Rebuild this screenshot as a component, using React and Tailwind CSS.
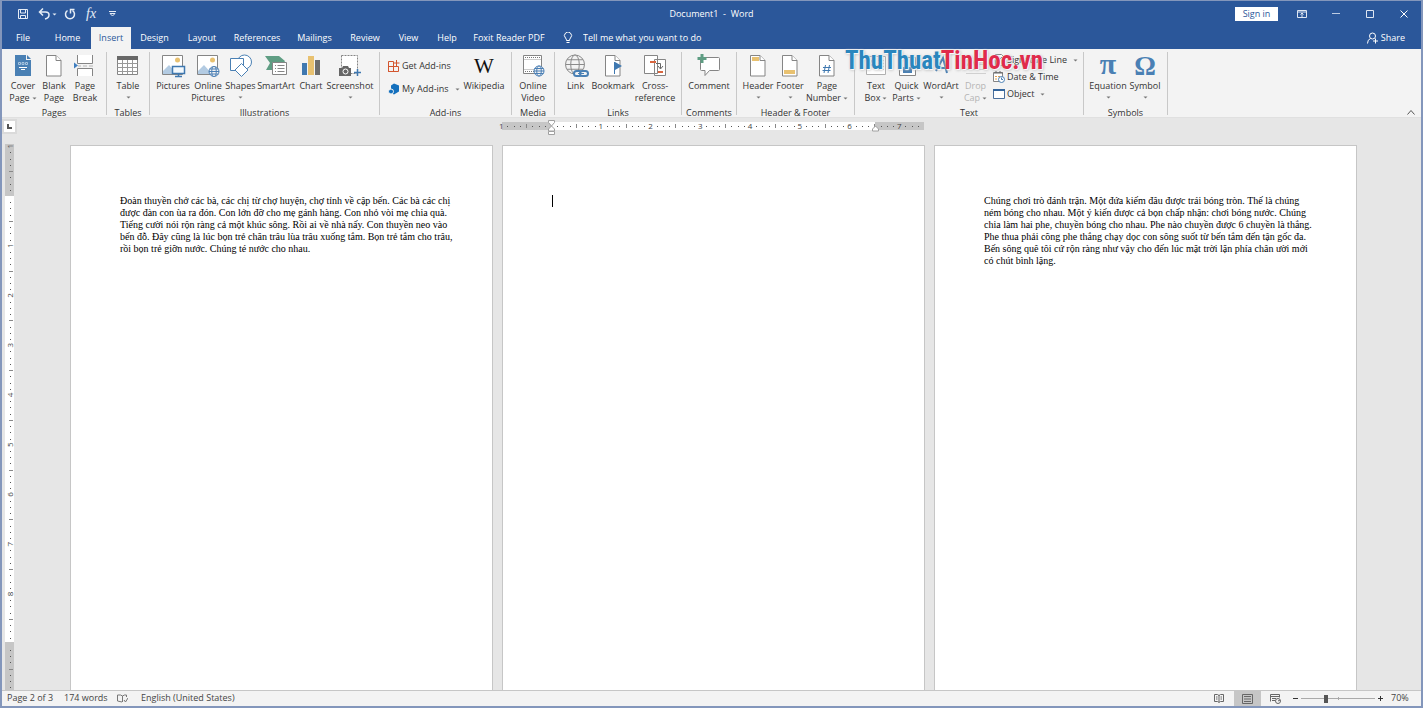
import clsx from 'clsx'

const INCH = 49.75

const tabs = [
  { name: 'File', width: 'w-[42px]' },
  { name: 'Home', width: 'w-[47px]' },
  { name: 'Insert', width: 'w-[40px]' },
  { name: 'Design', width: 'w-[47px]' },
  { name: 'Layout', width: 'w-[48px]' },
  { name: 'References', width: 'w-[62px]' },
  { name: 'Mailings', width: 'w-[53px]' },
  { name: 'Review', width: 'w-[48px]' },
  { name: 'View', width: 'w-[39px]' },
  { name: 'Help', width: 'w-[38px]' },
  { name: 'Foxit Reader PDF', width: 'w-[86px]' },
]

const leftPage = [
  'Đoàn thuyền chở các bà, các chị từ chợ huyện, chợ tỉnh về cập bến. Các bà các chị',
  'được đàn con ùa ra đón. Con lớn đỡ cho mẹ gánh hàng. Con nhỏ vòi mẹ chia quà.',
  'Tiếng cười nói rộn ràng cả một khúc sông. Rồi ai về nhà nấy. Con thuyền neo vào',
  'bến đỗ. Đây cũng là lúc bọn trẻ chăn trâu lùa trâu xuống tắm. Bọn trẻ tắm cho trâu,',
  'rồi bọn trẻ giỡn nước. Chúng té nước cho nhau.',
]

const rightPage = [
  'Chúng chơi trò đánh trận. Một đứa kiếm đâu được trái bóng tròn. Thế là chúng',
  'ném bóng cho nhau. Một ý kiến được cả bọn chấp nhận: chơi bóng nước. Chúng',
  'chia làm hai phe, chuyền bóng cho nhau. Phe nào chuyền được 6 chuyền là thắng.',
  'Phe thua phải cõng phe thắng chạy dọc con sông suốt từ bến tắm đến tận gốc đa.',
  'Bến sông quê tôi cứ rộn ràng như vậy cho đến lúc mặt trời lặn phía chân ười mới',
  'có chút bình lặng.',
]

/* Icons */

function Icon({ children, className = 'w-[26px] h-6', box = '0 0 26 24' }) {
  return (
    <svg className={className} viewBox={box} fill="none" stroke="#858585" strokeWidth="1" aria-hidden="true">
      {children}
    </svg>
  )
}

function Caret({ className }) {
  return (
    <svg className={clsx('inline-block w-[5px] h-[3px]', className)} viewBox="0 0 5 3" aria-hidden="true">
      <path d="M0.5 0.5h4l-2 2z" fill="currentColor" />
    </svg>
  )
}

function Globe({ x, y, r, color = '#4a7fb5' }) {
  return (
    <g stroke={color} fill="#f3f3f3">
      <circle cx={x} cy={y} r={r} />
      <ellipse cx={x} cy={y} rx={r * 0.45} ry={r} />
      <path d={`M${x - r} ${y}h${r * 2}M${x - r * 0.85} ${y - r * 0.5}h${r * 1.7}M${x - r * 0.85} ${y + r * 0.5}h${r * 1.7}`} />
    </g>
  )
}

function PagePath() {
  return (
    <>
      <path d="M5.5 1.5h9.500l5 5v15.500h-14.500z" fill="#fff" />
      <path d="M15 1.500v5h5" fill="#fff" />
    </>
  )
}

const CoverIcon = () => (
  <Icon>
    <path d="M5 1h11v5h5v16h-16z" fill="#4a80b4" stroke="none" />
    <path d="M17 1l4 4h-4z" fill="#4a80b4" stroke="none" />
    <path d="M8.500 8.500h2v2h-2zM12 8.500h2v2h-2zM15.500 8.500h2v2h-2z" stroke="#a9c5de" />
    <path d="M9 13.500h8M11 15.500h4" stroke="#fff" />
  </Icon>
)

const BlankIcon = () => <Icon><PagePath /></Icon>

const BreakIcon = () => (
  <Icon>
    <path d="M5.500 1v8.500h15v-8.500M5.500 22v-7.500h15v7.500" fill="#fff" />
    <path d="M6 12h3M11 12h4M17 12h4" stroke="#b5b5b5" />
    <path d="M2 8.500v6l4-3z" fill="#3f7ebf" stroke="none" />
  </Icon>
)

const TableIcon = () => (
  <Icon>
    <path d="M2.500 2.500h20v18h-20z" fill="#fff" />
    <path d="M2 2h21v4h-21z" fill="#686868" stroke="none" />
    <path d="M2.500 9.500h20M2.500 13.500h20M2.500 17.500h20M7.500 6v14M12.500 6v14M17.500 6v14" stroke="#999" />
  </Icon>
)

function PictureBase() {
  return (
    <>
      <path d="M2.500 1.500h20v19h-20z" fill="#fff" />
      <circle cx="17.500" cy="6" r="2.500" fill="#e8c170" stroke="none" />
      <path d="M3 20v-3l6-6 8 9z" fill="#b3cbe2" stroke="none" />
    </>
  )
}

const PicturesIcon = () => (
  <Icon>
    <PictureBase />
    <path d="M12.500 12.500h12v7h-12z" fill="#f3f8fc" stroke="#3f78b0" strokeWidth="1.500" />
    <path d="M15 22.500h7M18.500 20v2" stroke="#3f78b0" strokeWidth="1.500" />
  </Icon>
)

const OnlinePicturesIcon = () => (
  <Icon><PictureBase /><Globe x={19} y={17.500} r={5} /></Icon>
)

const ShapesIcon = () => (
  <Icon>
    <g stroke="#4a80b4" fill="#fff">
      <circle cx="16.500" cy="8" r="7" />
      <path d="M2.500 4.500h13v12h-13z" />
      <path d="M13.500 9.500l6.500 6.500-6.500 6.500-6.500-6.500z" />
    </g>
  </Icon>
)

const SmartArtIcon = () => (
  <Icon>
    <path d="M2 2h14l6 5-1 2h-9v7h-9l4-7z" fill="#5f9d83" stroke="none" />
    <path d="M9.500 8.500h14v12h-14z" fill="#fff" />
    <path d="M12 11.500h1M12 14.500h1M12 17.500h1M14.500 11.500h7M14.500 14.500h7M14.500 17.500h7" />
  </Icon>
)

const ChartIcon = () => (
  <Icon>
    <path d="M4 9h5v12h-5z" fill="#3f78b0" stroke="none" />
    <path d="M10 2h6v19h-6z" fill="#e8c170" stroke="none" />
    <path d="M17 6h5v15h-5z" fill="#6d6d6d" stroke="none" />
  </Icon>
)

const ScreenshotIcon = () => (
  <Icon>
    <path d="M4.500 1.500h16v18h-16z" fill="#fff" strokeDasharray="2 1" />
    <path d="M2 14h3l1-2h5l1 2h2v8h-12z" fill="#666" stroke="none" />
    <circle cx="8.500" cy="17.500" r="2.500" stroke="#fff" />
    <path d="M20.500 15v7M17 18.500h7" stroke="#3f78b0" strokeWidth="1.500" />
  </Icon>
)

const WikipediaIcon = () => (
  <span className="flex h-6 items-center justify-center font-['Liberation_Serif',serif] text-[21px] leading-6 text-[#111]">W</span>
)

const VideoIcon = () => (
  <Icon>
    <path d="M3.500 1.500h18v18h-18z" fill="#fff" />
    <path d="M5 3.500h16M5 17.500h16" stroke="#777" strokeDasharray="1 1" />
    <path d="M4 5.500h17M4 15.500h17" stroke="#ccc" />
    <Globe x={19} y={17} r={5} />
  </Icon>
)

const LinkIcon = () => (
  <Icon>
    <Globe x={12} y={10.500} r={9.500} color="#8a8a8a" />
    <g stroke="#4a80b4" strokeWidth="2" fill="#f3f3f3">
      <rect x="11" y="17" width="8" height="5" rx="2.500" />
      <rect x="17" y="17" width="8" height="5" rx="2.500" />
    </g>
    <path d="M15 19.500h6" stroke="#4a80b4" />
  </Icon>
)

const BookmarkIcon = () => (
  <Icon>
    <PagePath />
    <path d="M14.500 8v12" stroke="#3f78b0" />
    <path d="M15 8l7 4-7 4z" fill="#3f78b0" stroke="none" />
  </Icon>
)

const CrossRefIcon = () => (
  <Icon>
    <path d="M2.500 1.500h13v18h-13zM12.500 5.500h11v16h-11z" fill="#fff" />
    <path d="M8 8h6M16 18h5" stroke="#d8663f" strokeWidth="2" />
    <path d="M14 9.500h4.500v5M16 12l2.500 3 2.500-3" stroke="#666" />
  </Icon>
)

const CommentIcon = () => (
  <Icon>
    <path d="M4.500 3.500h18q1 0 1 1v11q0 1-1 1h-9l-4.500 5v-5h-3.500q-1 0-1-1z" fill="#fff" />
    <path d="M6 0v9M1.500 4.500h9" stroke="#5f9d83" strokeWidth="3" />
  </Icon>
)

const HeaderIcon = () => (
  <Icon><PagePath /><path d="M7 3h7v4h-7z" fill="#e8c170" stroke="none" /></Icon>
)

const FooterIcon = () => (
  <Icon><PagePath /><path d="M7 16h11v4h-11z" fill="#e8c170" stroke="none" /></Icon>
)

const PageNumberIcon = () => (
  <Icon>
    <PagePath />
    <path d="M11.500 11l-1.500 8M15.500 11l-1.500 8M9 13.500h8M8.500 16.500h8" stroke="#3f78b0" />
  </Icon>
)

const TextBoxIcon = () => (
  <Icon>
    <path d="M3.500 2.500h19v18h-19z" fill="#fff" stroke="#b0b0b0" />
    <path d="M15 6.500h6M15 9.500h6M15 12.500h6M15 15.500h6" stroke="#ccc" />
    <path d="M6 13l3-7 3 7M7 11h4" stroke="#9db9d4" />
  </Icon>
)

const QuickPartsIcon = () => (
  <Icon>
    <path d="M5.500 3.500h16v18h-16z" fill="#fff" />
    <path d="M9 13h9v6h-9z" fill="#4a80b4" stroke="none" />
  </Icon>
)

const WordArtIcon = () => (
  <Icon><path d="M8 17l7-13 4 15M10 14h8" stroke="#4a80b4" strokeWidth="2" /></Icon>
)

const DropCapIcon = () => (
  <Icon>
    <path d="M3 15.500h20M3 19.500h20M14 5.500h9M14 10.500h9" stroke="#d0d0d0" />
    <path d="M4 12l4-9 4 9" stroke="#c6c6c6" />
  </Icon>
)

const EquationIcon = () => (
  <span className="flex h-5 items-center justify-center font-['Liberation_Serif',serif] text-[30px] font-bold leading-5 text-[#4a80b4]">π</span>
)

const SymbolIcon = () => (
  <span className="flex h-6 items-center justify-center font-['Liberation_Serif',serif] text-[27px] font-bold leading-6 text-[#4a80b4]">Ω</span>
)

const GetAddinsIcon = () => (
  <Icon className="w-3 h-3" box="0 0 12 12">
    <path d="M0.500 1.500h5v10h-5zM0.500 6.500h10v5h-10zM8.500 0v6M5.500 3h6" stroke="#d3552e" />
  </Icon>
)

const MyAddinsIcon = () => (
  <Icon className="w-3 h-3" box="0 0 12 12">
    <path d="M6 0.500l5 2v6l-5 3-3-1.500v-7.500z" fill="#1470bd" stroke="none" />
    <circle cx="3" cy="8.500" r="2.500" fill="#1470bd" stroke="#f3f3f3" />
  </Icon>
)

const SignatureIcon = () => (
  <Icon className="w-3 h-3" box="0 0 12 12">
    <path d="M2.500 0.500h6l2 2v9h-8z" fill="#fff" />
    <path d="M4 8l5-5" stroke="#4a80b4" />
  </Icon>
)

const DateIcon = () => (
  <Icon className="w-3 h-3" box="0 0 12 12">
    <path d="M0.500 1.500h9v9h-9z" fill="#fff" />
    <path d="M1 2h9M3 0v2M7 0v2" stroke="#666" />
    <path d="M2 5.500h2M2 8h2M5 5.500h2" stroke="#e0a050" />
    <circle cx="8.500" cy="8.500" r="3" fill="#fff" stroke="#4a80b4" />
    <path d="M8.500 6.500v2h1.500" stroke="#4a80b4" />
  </Icon>
)

const ObjectIcon = () => (
  <Icon className="w-3 h-3" box="0 0 12 12">
    <path d="M0.500 1.500h11v9h-11z" fill="#fff" stroke="#4a6f9c" />
    <path d="M0 2h12" stroke="#33659c" strokeWidth="2" />
  </Icon>
)

/* Ribbon */

function BigButton({ icon, lines, menu, width, disabled }) {
  return (
    <button
      disabled={disabled}
      className={clsx('flex shrink-0 flex-col items-center whitespace-nowrap leading-3', width, disabled && 'text-[#b5b5b5]')}
    >
      <span className="mb-[2px] flex h-6 w-full justify-center">{icon}</span>
      {lines.map((line, i) => (
        <span key={line}>
          {line}
          {menu && i === 1 && <Caret className="ml-[2px] align-middle text-[#777]" />}
        </span>
      ))}
      {menu && lines.length === 1 && <Caret className="mt-1 text-[#777]" />}
    </button>
  )
}

function SmallButton({ icon, label, menu, gap }) {
  return (
    <button className="flex items-center gap-[2px] whitespace-nowrap leading-3">
      {icon}
      {label}
      {menu && <Caret className={clsx('text-[#777]', gap)} />}
    </button>
  )
}

function Group({ label, width, pad, children }) {
  return (
    <section aria-label={label} className={clsx('flex shrink-0 flex-col', width)}>
      <div className={clsx('flex h-[53px] shrink-0', pad)}>{children}</div>
      <div className="whitespace-nowrap text-center leading-3 text-[#333]">{label}</div>
    </section>
  )
}

const Divider = () => <div className="-mt-[2px] mb-[2px] w-px shrink-0 bg-[#c8c8c8]" />

function Ribbon() {
  return (
    <div className="relative flex h-[69px] shrink-0 border-b border-[#e0e0e0] bg-[#f3f3f3] pt-[5px] text-[#333]">
      <Group label="Pages" width="w-[104px]" pad="pl-[5px]">
        <BigButton icon={<CoverIcon />} lines={['Cover', 'Page']} menu width="w-[32px]" />
        <BigButton icon={<BlankIcon />} lines={['Blank', 'Page']} width="w-[30px]" />
        <BigButton icon={<BreakIcon />} lines={['Page', 'Break']} width="w-[32px]" />
      </Group>
      <Divider />
      <Group label="Tables" width="w-[42px]">
        <BigButton icon={<TableIcon />} lines={['Table']} menu width="w-[42px]" />
      </Group>
      <Divider />
      <Group label="Illustrations" width="w-[229px]" pad="pl-1">
        <BigButton icon={<PicturesIcon />} lines={['Pictures']} width="w-[38px]" />
        <BigButton icon={<OnlinePicturesIcon />} lines={['Online', 'Pictures']} width="w-[32px]" />
        <BigButton icon={<ShapesIcon />} lines={['Shapes']} menu width="w-[33px]" />
        <BigButton icon={<SmartArtIcon />} lines={['SmartArt']} width="w-[38px]" />
        <BigButton icon={<ChartIcon />} lines={['Chart']} width="w-[32px]" />
        <BigButton icon={<ScreenshotIcon />} lines={['Screenshot']} menu width="w-[46px]" />
      </Group>
      <Divider />
      <Group label="Add-ins" width="w-[131px]" pad="pl-2">
        <div className="flex w-[75px] flex-col gap-[11px] pt-[6px]">
          <SmallButton icon={<GetAddinsIcon />} label="Get Add-ins" />
          <SmallButton icon={<MyAddinsIcon />} label="My Add-ins" menu gap="ml-1" />
        </div>
        <BigButton icon={<WikipediaIcon />} lines={['Wikipedia']} width="w-[42px]" />
      </Group>
      <Divider />
      <Group label="Media" width="w-[42px]">
        <BigButton icon={<VideoIcon />} lines={['Online', 'Video']} width="w-[42px]" />
      </Group>
      <Divider />
      <Group label="Links" width="w-[126px]" pad="pl-[5px]">
        <BigButton icon={<LinkIcon />} lines={['Link']} width="w-[31px]" />
        <BigButton icon={<BookmarkIcon />} lines={['Bookmark']} width="w-[44px]" />
        <BigButton icon={<CrossRefIcon />} lines={['Cross-', 'reference']} width="w-[40px]" />
      </Group>
      <Divider />
      <Group label="Comments" width="w-[54px]">
        <BigButton icon={<CommentIcon />} lines={['Comment']} width="w-[54px]" />
      </Group>
      <Divider />
      <Group label="Header & Footer" width="w-[117px]" pad="pl-[5px]">
        <BigButton icon={<HeaderIcon />} lines={['Header']} menu width="w-[32px]" />
        <BigButton icon={<FooterIcon />} lines={['Footer']} menu width="w-[32px]" />
        <BigButton icon={<PageNumberIcon />} lines={['Page', 'Number']} menu width="w-[42px]" />
      </Group>
      <Divider />
      <Group label="Text" width="w-[228px]" pad="pl-[5px]">
        <BigButton icon={<TextBoxIcon />} lines={['Text', 'Box']} menu width="w-[32px]" />
        <BigButton icon={<QuickPartsIcon />} lines={['Quick', 'Parts']} menu width="w-[29px]" />
        <BigButton icon={<WordArtIcon />} lines={['WordArt']} menu width="w-[40px]" />
        <BigButton icon={<DropCapIcon />} lines={['Drop', 'Cap']} menu disabled width="w-[29px]" />
        <div className="flex flex-col gap-[5px] pl-[3px]">
          <SmallButton icon={<SignatureIcon />} label="Signature Line" menu gap="ml-1" />
          <SmallButton icon={<DateIcon />} label="Date & Time" />
          <SmallButton icon={<ObjectIcon />} label="Object" menu gap="ml-1" />
        </div>
      </Group>
      <Divider />
      <Group label="Symbols" width="w-[83px]" pad="pl-1">
        <BigButton icon={<EquationIcon />} lines={['Equation']} menu width="w-[40px]" />
        <BigButton icon={<SymbolIcon />} lines={['Symbol']} menu width="w-[34px]" />
      </Group>
      <Divider />
      <button aria-label="Collapse the Ribbon" className="mb-[2px] ml-auto mr-[6px] self-end">
        <Icon className="w-2 h-[5px]" box="0 0 8 5"><path d="M0.500 4.500l3.500-4 3.500 4" stroke="#555" /></Icon>
      </button>

      {/* Watermark */}
      <div className="pointer-events-none absolute left-[843px] top-0 whitespace-nowrap font-['Roboto_Condensed','Liberation_Sans_Narrow',sans-serif] text-[25px] font-bold leading-6 text-[#2a86bd] [text-shadow:0_0_2px_#fff,1px_1px_1px_#fff,1px_1px_3px_#999]">
        ThuThuat<span className="text-[#e02b4b]">TinHoc.vn</span>
      </div>
    </div>
  )
}

/* Title bar and tabs */

function TitleBar() {
  return (
    <div className="grid h-[26px] shrink-0 grid-cols-[1fr_auto_1fr] items-center">
      <div className="flex items-center pl-[15px]">
        <button aria-label="Save">
          <Icon className="w-3 h-3" box="0 0 12 12">
            <path d="M1.500 1.500h9v9h-9zM3.500 1.500v3.500h5v-3.500M3.500 10.500v-3h5v3" stroke="#e6edf6" />
          </Icon>
        </button>
        <button aria-label="Undo" className="ml-[9px] flex items-center gap-[2px] text-[#e6edf6]">
          <Icon className="w-3 h-3" box="0 0 12 12">
            <path d="M2 4h5.500q3.500 0 3.500 3t-4 4M5 0.500l-3.500 3.500 3.500 3.500" stroke="#e6edf6" strokeWidth="1.500" />
          </Icon>
          <Caret />
        </button>
        <button aria-label="Redo" className="ml-[7px]">
          <Icon className="w-3 h-3" box="0 0 12 12">
            <path d="M3.500 2.500a4.500 4.500 0 1 0 5 0M6.500 5.500v-4h4" stroke="#e6edf6" strokeWidth="1.500" />
          </Icon>
        </button>
        <button aria-label="Insert function" className="ml-[10px] font-['Liberation_Serif',serif] text-[14px] italic leading-4 text-[#e6edf6]">
          fx
        </button>
        <button aria-label="Customize Quick Access Toolbar" className="ml-[13px]">
          <Icon className="w-[7px] h-[6px]" box="0 0 7 6">
            <path d="M0 0.500h7M1 2.500h5l-2.500 2.500z" stroke="#e6edf6" />
          </Icon>
        </button>
      </div>
      <h1 className="whitespace-pre text-white">Document1  -  Word</h1>
      <div className="flex items-center justify-end">
        <button className="mr-[19px] h-[14px] w-[43px] bg-white leading-3 text-[#2b579a]">Sign in</button>
        <button aria-label="Ribbon Display Options" className="mr-[25px]">
          <Icon className="w-[10px] h-[9px]" box="0 0 10 9">
            <path d="M0.500 0.500h9v7h-9zM0.500 2h9M5 7v-4M3.500 4.500l1.500-1.500 1.500 1.500" stroke="#dfe7f3" />
          </Icon>
        </button>
        <button aria-label="Minimize" className="mr-[26px]">
          <Icon className="w-2 h-2" box="0 0 8 8"><path d="M0 3.500h8" stroke="#bccbe2" /></Icon>
        </button>
        <button aria-label="Maximize" className="mr-[26px]">
          <Icon className="w-2 h-2" box="0 0 8 8"><path d="M0.500 0.500h7v7h-7z" stroke="#dfe7f3" /></Icon>
        </button>
        <button aria-label="Close" className="mr-[13px]">
          <Icon className="w-2 h-2" box="0 0 8 8"><path d="M0.500 0.500l7 7M7.500 0.500l-7 7" stroke="#fff" /></Icon>
        </button>
      </div>
    </div>
  )
}

function TabBar() {
  return (
    <nav className="flex h-[22px] shrink-0 text-white">
      {tabs.map((tab) => (
        <button
          key={tab.name}
          className={clsx(
            'shrink-0 whitespace-nowrap text-center',
            tab.width,
            tab.name === 'Insert' && 'bg-[#f3f3f3] text-[#2b579a]',
          )}
        >
          {tab.name}
        </button>
      ))}
      <label className="ml-[11px] flex items-center gap-[10px]">
        <Icon className="w-[10px] h-3" box="0 0 10 12">
          <path d="M3.500 8.500q0-1.500-1-2.500a3.500 3.500 0 1 1 5 0q-1 1-1 2.500zM3.500 10.500h3" stroke="#fff" />
        </Icon>
        <input
          aria-label="Tell me what you want to do"
          placeholder="Tell me what you want to do"
          className="w-[140px] bg-transparent outline-none placeholder:text-white placeholder:opacity-100"
        />
      </label>
      <button className="ml-auto mr-[16px] flex items-center gap-[3px]">
        <Icon className="w-[11px] h-3" box="0 0 11 12">
          <circle cx="5.500" cy="4" r="3" stroke="#fff" />
          <path d="M0.500 11.500q0-4 3-5M8.500 6.500v5M6 9h5" stroke="#fff" />
        </Icon>
        Share
      </button>
    </nav>
  )
}

/* Rulers: a tick each eighth of an inch, a longer one at the half */

function rulerMarks(from, to) {
  const marks = []
  for (let i = from; i <= to; i++) {
    if (i !== 0) marks.push(i)
  }
  return marks
}

function HorizontalRuler() {
  return (
    <svg className="h-4 w-[423px] shrink-0 overflow-visible" viewBox="0 0 423 16" aria-hidden="true">
      <rect x="0" y="4" width="422" height="8" fill="#c6c6c6" />
      <rect x="49" y="4" width="324" height="8" fill="#fff" />
      {rulerMarks(-8, 59).map((i) => {
        const x = 49 + (i * INCH) / 8
        if (i % 8 === 0) {
          return (
            <text key={i} x={x} y="11" fontSize="8" textAnchor="middle" fill="#444">{Math.abs(i / 8)}</text>
          )
        }
        if (i % 4 === 0) return <rect key={i} x={Math.round(x)} y="6" width="1" height="4" fill="#888" />
        return <rect key={i} x={Math.round(x)} y="8" width="1" height="1" fill="#555" />
      })}
      <g fill="#fff" stroke="#a0a0a0">
        <path d="M46.500 2.500h6v2l-3 3.500-3-3.500zM49.500 8l3 3v2h-6v-2zM46.500 13.500h6v3h-6z" />
        <path d="M373.500 8l3 3v2h-6v-2z" />
      </g>
    </svg>
  )
}

function VerticalRuler() {
  return (
    <svg className="h-[900px] w-[9px] shrink-0" viewBox="0 0 9 900" aria-hidden="true">
      <rect x="0" y="0" width="9" height="900" fill="#c6c6c6" />
      <rect x="0" y="52" width="9" height="446" fill="#fff" />
      {rulerMarks(-8, 85).map((i) => {
        const y = 52 + (i * INCH) / 8
        if (i % 8 === 0 && i < 72) {
          return (
            <text key={i} transform={`translate(8 ${y}) rotate(-90)`} fontSize="8" textAnchor="middle" fill="#444">
              {Math.abs(i / 8)}
            </text>
          )
        }
        if (i % 8 === 0) return null
        if (i % 4 === 0) return <rect key={i} x="4" y={Math.round(y)} width="4" height="1" fill="#888" />
        return <rect key={i} x="5" y={Math.round(y)} width="1" height="1" fill="#555" />
      })}
    </svg>
  )
}

function Page({ lines, children }) {
  return (
    <article className="w-[423px] shrink-0 border border-b-0 border-[#c6c6c6] bg-white px-[49px] pt-[49px] font-['Liberation_Serif',serif] text-[10px] leading-3 text-black">
      {lines && (
        <p className="whitespace-nowrap">
          {lines.map((line) => (
            <span key={line} className="block">{line}</span>
          ))}
        </p>
      )}
      {children}
    </article>
  )
}

function Workspace() {
  return (
    <main className="flex min-h-0 flex-1 flex-col overflow-hidden bg-[#e6e6e6]">
      <div className="flex h-[26px] shrink-0">
        <div className="w-4 shrink-0">
          <button aria-label="Tab selector" className="mt-px flex size-[15px] items-center justify-center border-2 border-[#dadada] bg-white">
            <Icon className="size-[5px]" box="0 0 5 5"><path d="M1 0v4h4" stroke="#555" strokeWidth="2" /></Icon>
          </button>
        </div>
        <div className="flex flex-1 justify-center pr-3">
          <HorizontalRuler />
        </div>
      </div>
      <div className="flex min-h-0 flex-1 overflow-hidden">
        <div className="w-4 shrink-0 overflow-hidden pl-[3px]">
          <VerticalRuler />
        </div>
        <div className="flex flex-1 justify-center gap-[9px] pr-3 pt-px">
          <Page lines={leftPage} />
          <Page>
            <div className="h-3 w-px bg-black" />
          </Page>
          <Page lines={rightPage} />
        </div>
      </div>
    </main>
  )
}

function StatusBar() {
  return (
    <footer className="flex h-4 shrink-0 items-center border-t border-[#c6c6c6] bg-[#f3f3f3] pl-[5px] text-[#444]">
      <span className="w-[57px] pb-[2px]">Page 2 of 3</span>
      <span className="w-[53px] pb-[2px]">174 words</span>
      <button aria-label="Proofing" className="mr-[13px]">
        <Icon className="w-[11px] h-[9px]" box="0 0 11 9">
          <path d="M5 8l-4.500-1v-6h3l2 1 2-1h2v2M5.500 2v6M7 6l1.500 2 2.500-4" stroke="#777" />
        </Icon>
      </button>
      <span className="pb-[2px]">English (United States)</span>
      <div className="ml-auto flex h-full items-center">
        <button aria-label="Read Mode" className="mr-[10px]">
          <Icon className="w-[10px] h-[9px]" box="0 0 10 9">
            <path d="M0.500 0.500h3l1.500 1 1.500-1h3v7h-3l-1.500 1-1.500-1h-3zM5 1v7M2 3h1.500M2 5h1.500M6.500 3h1.500M6.500 5h1.500" stroke="#666" />
          </Icon>
        </button>
        <button aria-label="Print Layout" className="flex h-full w-[27px] items-center justify-center bg-[#c6c6c6]">
          <Icon className="w-[11px] h-[10px]" box="0 0 11 10">
            <path d="M0.500 0.500h10v9h-10zM2 2.500h7M2 5h7M2 7.500h7" stroke="#666" />
          </Icon>
        </button>
        <button aria-label="Web Layout" className="ml-[9px] mr-3">
          <Icon className="w-[11px] h-[10px]" box="0 0 11 10">
            <path d="M0.500 7.500v-7h9v3M0.500 2.500h9M2 4.500h4M2 6.500h3" stroke="#666" />
            <circle cx="8" cy="7" r="2.500" stroke="#666" />
            <path d="M8 7l2-1" stroke="#666" />
          </Icon>
        </button>
        <button aria-label="Zoom out" className="mr-[3px]">
          <Icon className="w-[5px] h-[5px]" box="0 0 5 5"><path d="M0 2.500h5" stroke="#333" /></Icon>
        </button>
        <div className="relative flex w-[74px] items-center">
          <div className="absolute left-[37px] h-[3px] w-px bg-[#aaa]" />
          <input
            type="range"
            aria-label="Zoom"
            min="10"
            max="190"
            defaultValue="70"
            className="relative h-px w-full appearance-none bg-[#aaa] [&::-webkit-slider-thumb]:h-2 [&::-webkit-slider-thumb]:w-1 [&::-webkit-slider-thumb]:appearance-none [&::-webkit-slider-thumb]:bg-[#555]"
          />
        </div>
        <button aria-label="Zoom in" className="ml-[3px]">
          <Icon className="w-[5px] h-[5px]" box="0 0 5 5"><path d="M0 2.500h5M2.500 0v5" stroke="#333" /></Icon>
        </button>
        <span className="ml-2 mr-[13px] w-[17px] whitespace-nowrap pb-[2px]">70%</span>
      </div>
    </footer>
  )
}

export default function App() {
  return (
    <div className="flex h-screen flex-col overflow-hidden border-x-2 border-b-2 border-t border-[#8396bb] bg-[#2b579a] font-['Open_Sans','Noto_Sans',sans-serif] text-[9px] leading-3">
      <TitleBar />
      <TabBar />
      <Ribbon />
      <Workspace />
      <StatusBar />
    </div>
  )
}
